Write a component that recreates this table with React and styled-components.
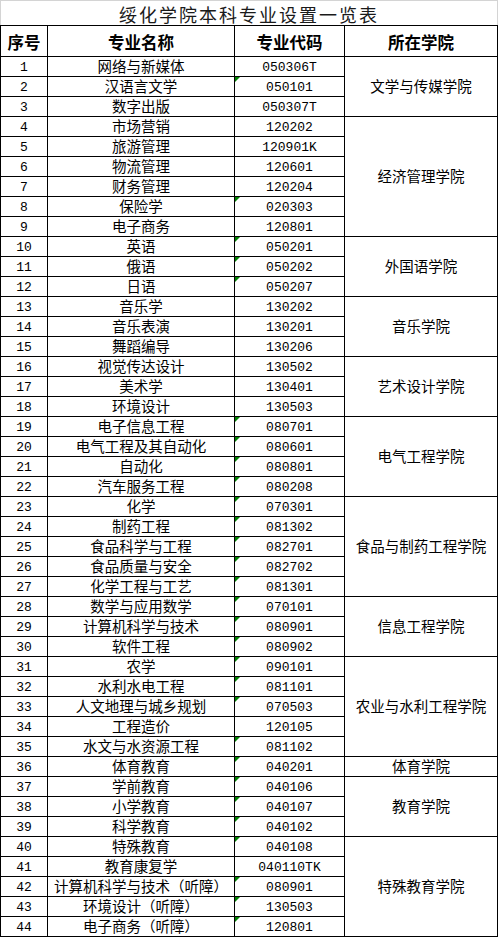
import React from 'react';
import styled, { createGlobalStyle } from 'styled-components';

const GlobalStyle = createGlobalStyle`
  body {
    margin: 0;
    background: #fff;
    font-family: "Noto Sans CJK SC", sans-serif;
    color: #000;
  }
`;

const Sheet = styled.div`
  width: 498px;
`;

const TitleBar = styled.div`
  box-sizing: border-box;
  height: 25px;
  padding-top: 2px;
  border: 1px solid #d4d4d4;
  border-bottom: none;
  display: flex;
  align-items: center;
  justify-content: center;
  font-size: 18px;
  letter-spacing: 2px;
  color: #1a1a1a;
  line-height: 1;
`;

const Grid = styled.div`
  display: grid;
  grid-template-columns: 47px 187px 110px 153px;
  grid-template-rows: 31px;
  grid-auto-rows: 20px;
  border-left: 1px solid #000;
  border-top: 1px solid #000;
`;

const Cell = styled.div`
  box-sizing: border-box;
  position: relative;
  border-right: 1px solid #000;
  border-bottom: 1px solid #000;
  display: flex;
  align-items: center;
  justify-content: center;
  white-space: nowrap;
  line-height: 1;
  font-size: 14.5px;
  font-family: ${p => (p.$mono ? '"Liberation Mono", "Noto Sans CJK SC", monospace' : '"Noto Sans CJK SC", sans-serif')};
  ${p => p.$mono && 'font-size: 13px; padding-top: 1px;'}
  ${p => p.$span && `grid-row: span ${p.$span};`}

  &::before {
    content: '';
    display: ${p => (p.$flag ? 'block' : 'none')};
    position: absolute;
    top: 0;
    left: 0;
    border-top: 5px solid #008000;
    border-right: 5px solid transparent;
  }
`;

const HeadCell = styled(Cell)`
  font-size: 16.5px;
  font-weight: 700;
  padding-top: 2px;
`;

const majors = [
  ['网络与新媒体', '050306T'],
  ['汉语言文学', '050101'],
  ['数字出版', '050307T'],
  ['市场营销', '120202'],
  ['旅游管理', '120901K'],
  ['物流管理', '120601'],
  ['财务管理', '120204'],
  ['保险学', '020303'],
  ['电子商务', '120801'],
  ['英语', '050201'],
  ['俄语', '050202'],
  ['日语', '050207'],
  ['音乐学', '130202'],
  ['音乐表演', '130201'],
  ['舞蹈编导', '130206'],
  ['视觉传达设计', '130502'],
  ['美术学', '130401'],
  ['环境设计', '130503'],
  ['电子信息工程', '080701'],
  ['电气工程及其自动化', '080601'],
  ['自动化', '080801'],
  ['汽车服务工程', '080208'],
  ['化学', '070301'],
  ['制药工程', '081302'],
  ['食品科学与工程', '082701'],
  ['食品质量与安全', '082702'],
  ['化学工程与工艺', '081301'],
  ['数学与应用数学', '070101'],
  ['计算机科学与技术', '080901'],
  ['软件工程', '080902'],
  ['农学', '090101'],
  ['水利水电工程', '081101'],
  ['人文地理与城乡规划', '070503'],
  ['工程造价', '120105'],
  ['水文与水资源工程', '081102'],
  ['体育教育', '040201'],
  ['学前教育', '040106'],
  ['小学教育', '040107'],
  ['科学教育', '040102'],
  ['特殊教育', '040108'],
  ['教育康复学', '040110TK'],
  ['计算机科学与技术（听障）', '080901'],
  ['环境设计（听障）', '130503'],
  ['电子商务（听障）', '120801'],
];

// first row number -> [college, rows it covers]
const colleges = {
  1: ['文学与传媒学院', 3],
  4: ['经济管理学院', 6],
  10: ['外国语学院', 3],
  13: ['音乐学院', 3],
  16: ['艺术设计学院', 3],
  19: ['电气工程学院', 4],
  23: ['食品与制药工程学院', 5],
  28: ['信息工程学院', 3],
  31: ['农业与水利工程学院', 5],
  36: ['体育学院', 1],
  37: ['教育学院', 3],
  40: ['特殊教育学院', 5],
};

// rows whose code cell carries the green "number stored as text" mark
const flagged = new Set([
  2, 8, 10, 11, 12,
  19, 20, 21, 22, 23, 24, 25, 26, 27, 28, 29, 30, 31, 32, 33,
  35, 36, 37, 38, 39, 40, 42, 43, 44,
]);

export default function App() {
  return (
    <Sheet>
      <GlobalStyle />
      <TitleBar>绥化学院本科专业设置一览表</TitleBar>
      <Grid>
        <HeadCell>序号</HeadCell>
        <HeadCell>专业名称</HeadCell>
        <HeadCell>专业代码</HeadCell>
        <HeadCell>所在学院</HeadCell>
        {majors.map(([name, code], i) => {
          const n = i + 1;
          const college = colleges[n];
          return (
            <React.Fragment key={n}>
              <Cell $mono>{n}</Cell>
              <Cell>{name}</Cell>
              <Cell $mono $flag={flagged.has(n)}>{code}</Cell>
              {college && <Cell $span={college[1]}>{college[0]}</Cell>}
            </React.Fragment>
          );
        })}
      </Grid>
    </Sheet>
  );
}
